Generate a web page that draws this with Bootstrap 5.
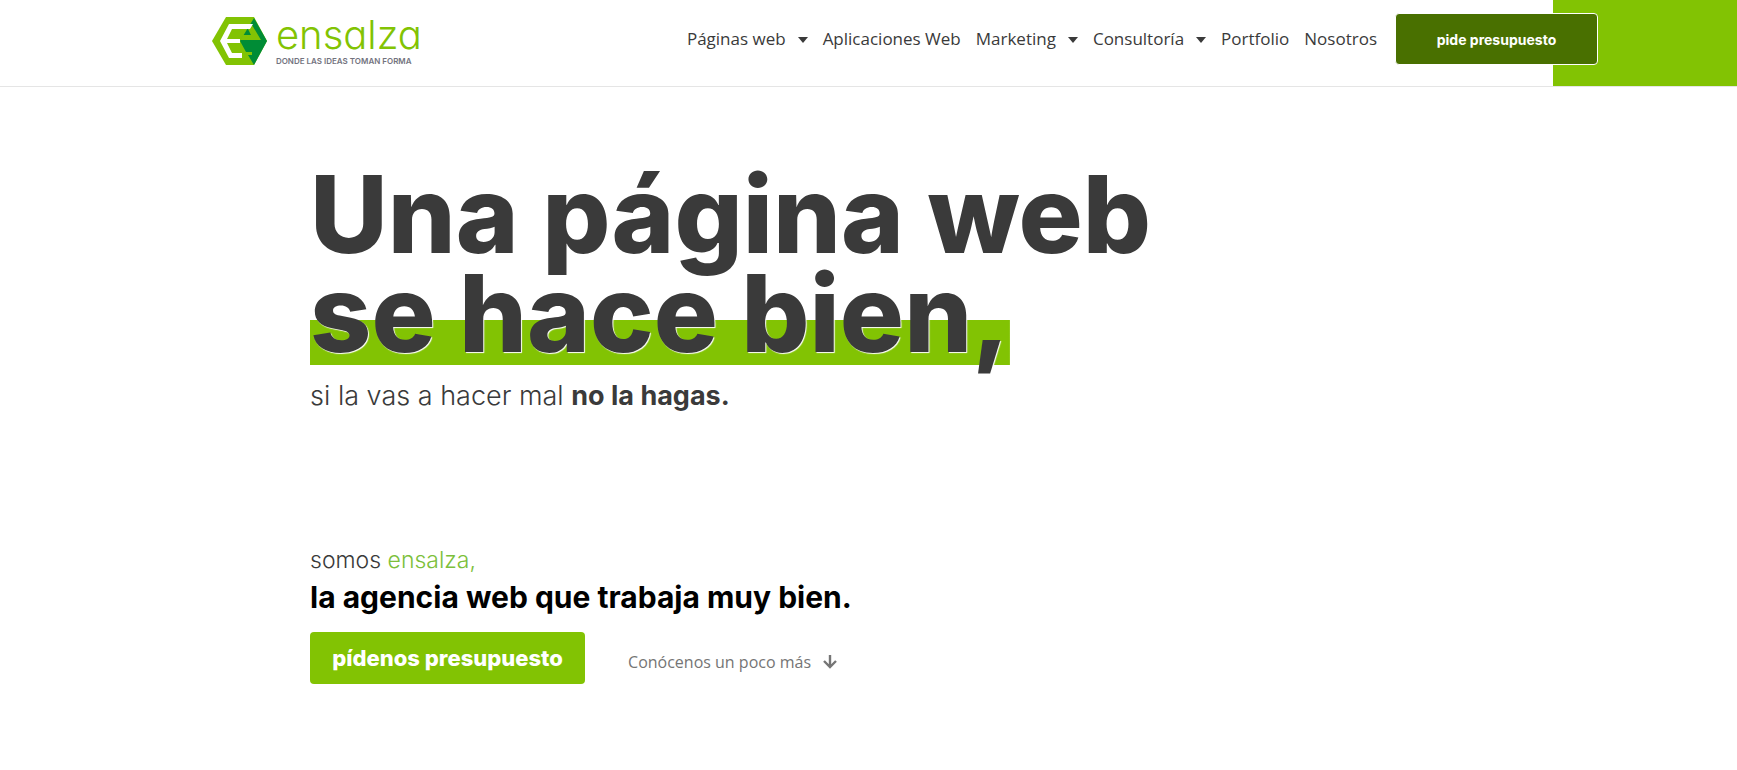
<!DOCTYPE html>
<html lang="es">
<head>
<meta charset="utf-8">
<meta name="viewport" content="width=device-width, initial-scale=1">
<title>ensalza</title>
<link href="https://cdn.jsdelivr.net/npm/bootstrap@5.3.0/dist/css/bootstrap.min.css" rel="stylesheet">
<style>
:root { --lime: #82c303; --forest: #497000; --ink: #3a3a3a; }
body { font-family: Inter, "Liberation Sans", sans-serif; color: var(--ink); background: #fff; }
.site-header { min-height: 87px; padding-left: 12.2%; border-bottom: 1px solid #e5e5e5; }
.logo-name { font-size: 40px; line-height: 40px; font-weight: 300; color: var(--lime); font-feature-settings: "cv11"; }
.logo-tag { font-size: 8px; line-height: 12px; font-weight: 600; color: #73737e; }
.main-nav { font-family: "Open Sans", "Liberation Sans", sans-serif; font-size: 17px; line-height: 24px; font-weight: 500; gap: 15px; }
.main-nav .nav-link { padding: 0; color: var(--ink); }
.main-nav svg { margin-left: 12px; }
.cta-zone { width: 360px; padding-left: 18px; background: linear-gradient(var(--lime), var(--lime)) right / 184px 100% no-repeat; }
.cta-top { width: 203px; height: 52px; border: 1px solid #fff; border-radius: 4px; background: var(--forest); color: #fff; font-size: 14px; font-weight: 700; }
.hero { padding: 78px 17.85% 0; }
.hero-title { font-size: 107px; line-height: 99px; font-weight: 800; }
.marked { padding-bottom: 2px; background: linear-gradient(var(--lime), var(--lime)) bottom / 100% 45px no-repeat; text-shadow: 1px 1px 1px #fff; }
.hero-sub { font-size: 27px; line-height: 40px; font-weight: 300; margin-top: 11px; }
.about { margin-top: 126px; }
.about-name { font-size: 23px; line-height: 36px; font-weight: 300; }
.about-name a { color: #7cbf3a; }
.about-claim { font-size: 30px; line-height: 38px; font-weight: 700; color: #000; }
.cta-main { width: 275px; height: 52px; border: 0; border-radius: 4px; background: var(--lime); color: #fff; font-size: 22px; line-height: 24px; font-weight: 800; }
.more-link { font-family: "Open Sans", "Liberation Sans", sans-serif; font-size: 16px; line-height: 24px; font-weight: 500; color: #757575; margin: 8px 0 0 43px; gap: 12px; }
</style>
</head>
<body>
<header class="site-header d-flex justify-content-between">
  <a href="#" class="d-flex align-items-center text-decoration-none pb-1">
    <svg width="56" height="48" viewBox="0 0 56 48" aria-hidden="true">
      <path d="M14 0H42L55 24 42 48H14L0 24Z" fill="#82c303"/>
      <path d="M42 1L55 24 42 48 36 38H40V35H34L28 24Z" fill="#008c36"/>
      <path d="M40 8L49 23H28L31 18H39L36 12Z" fill="#82c303"/>
      <path d="M41 7H17L8 24 17 41H30V36H20L15 26H28V22H15L20 12H38Z" fill="#fff"/>
    </svg>
    <span class="d-flex flex-column ms-2">
      <span class="logo-name">ensalza</span>
      <span class="logo-tag">DONDE LAS IDEAS TOMAN FORMA</span>
    </span>
  </a>
  <div class="d-flex">
    <nav class="main-nav d-flex align-items-center pb-2" aria-label="Principal">
      <a class="nav-link" href="#">Páginas web<svg width="10" height="6" viewBox="0 0 10 6" aria-hidden="true"><path d="M0 0H10L5 6Z" fill="currentColor"/></svg></a>
      <a class="nav-link" href="#">Aplicaciones Web</a>
      <a class="nav-link" href="#">Marketing<svg width="10" height="6" viewBox="0 0 10 6" aria-hidden="true"><path d="M0 0H10L5 6Z" fill="currentColor"/></svg></a>
      <a class="nav-link" href="#">Consultoría<svg width="10" height="6" viewBox="0 0 10 6" aria-hidden="true"><path d="M0 0H10L5 6Z" fill="currentColor"/></svg></a>
      <a class="nav-link" href="#">Portfolio</a>
      <a class="nav-link" href="#">Nosotros</a>
    </nav>
    <div class="cta-zone d-flex align-items-center pb-2">
      <button type="button" class="cta-top">pide presupuesto</button>
    </div>
  </div>
</header>
<main class="hero">
  <h1 class="hero-title m-0 text-nowrap">Una página web<br><span class="marked d-inline-block">se hace bien,</span></h1>
  <p class="hero-sub mb-0">si la vas a hacer mal <strong class="fw-bold">no la hagas.</strong></p>
  <section class="about">
    <p class="about-name m-0">somos <a href="#" class="text-decoration-none">ensalza,</a></p>
    <h2 class="about-claim m-0">la agencia web que trabaja muy bien.</h2>
    <div class="d-flex align-items-center mt-3">
      <button type="button" class="cta-main">pídenos presupuesto</button>
      <a href="#" class="more-link d-flex align-items-center text-decoration-none">Conócenos un poco más
        <svg width="14" height="14" viewBox="0 0 14 14" fill="none" stroke="currentColor" stroke-width="2.4" aria-hidden="true"><path d="M7 0V12M1 6L7 12L13 6"/></svg></a>
    </div>
  </section>
</main>
<script src="https://cdn.jsdelivr.net/npm/bootstrap@5.3.0/dist/js/bootstrap.bundle.min.js"></script>
</body>
</html>
